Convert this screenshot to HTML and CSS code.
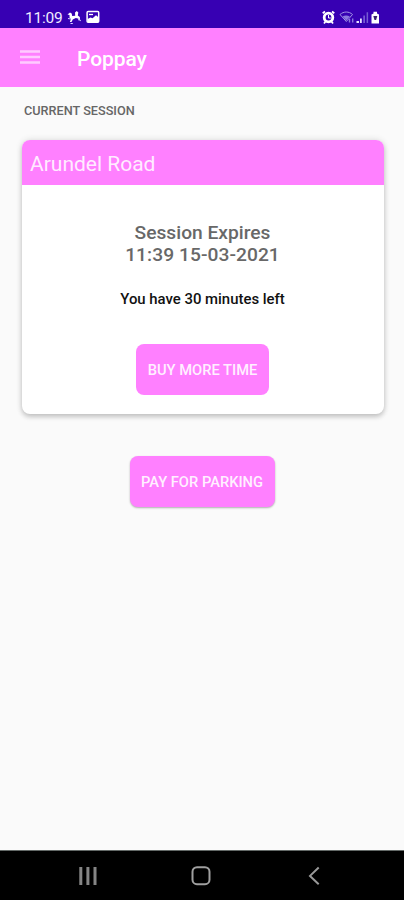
FILE: index.html
```
<!DOCTYPE html>
<html lang="en">
<head>
<meta charset="utf-8">
<meta name="viewport" content="width=device-width, initial-scale=1">
<title>Poppay</title>
<link rel="stylesheet" href="styles.css">
</head>
<body>
<div class="phone">
  <div class="status">
    <span class="clock">11:09</span>
    <svg class="horse" width="15" height="15" viewBox="0 0 15 15"><path d="M.500 4.500L3 2.500l1.700 1 .5 2.500 3-.300L8 2.500 9.800 1l1.500 1.500-.5 3 2 1.500.3 3-1.500.5-.5-2-2.300-.5-3 1.500-1.300 2.500H2.800L4 9 2.500 7.500V5z" fill="#fff"/><path d="M1 8.500l3 .5M3.500 13.500h2.300M11 8l2.700 3" fill="none" stroke="#d5cdff" stroke-width="1.100"/></svg>
    <svg class="photo" width="14" height="14" viewBox="0 0 14 14"><rect x="1.100" y="1.400" width="11.600" height="10.900" rx="1" fill="none" stroke="#fff" stroke-width="1.500"/><path d="M1.500 9l3-1.500 2 .8 3.500-3 2.500 2v5h-11z" fill="#fff"/><path d="M3 4.500h4" stroke="#fff" stroke-width="1.300"/></svg>
    <svg class="indicators" width="62" height="15" viewBox="0 0 62 15">
      <path d="M1.700 3.200L4 1.500M13.300 3.200L11 1.500M3 13.500l1.500-2M12 13.500l-1.500-2" stroke="#fff" stroke-width="1.800"/>
      <circle cx="7.500" cy="7.500" r="4.300" fill="none" stroke="#fff" stroke-width="2.800"/>
      <path d="M7.500 5v3h2.300" fill="none" stroke="#fff"/>
      <path d="M19 4.500c3.700-3.300 9-3.300 12.500 0L25.300 11.500z" fill="none" stroke="#a294e4" stroke-width="1"/>
      <path d="M21.500 6.500c2.200-1.300 5-1.300 7.300 0l-3.500 4z" fill="#8c79df"/>
      <path d="M28.500 9v3.500M31.700 12.500V8.500" stroke="#8b78dd" stroke-width="1.400"/>
      <path d="M35.500 13v-2H38v2zM39 13V8.500h1.800V13z" fill="#e7e2ff"/>
      <path d="M42.300 13V5.500h1.700V13zM45.600 13V2.200h1.500V13z" fill="#765bd2"/>
      <path d="M50.500 4.500l2-1V1.700h3.500v1.800l2 1v9h-7.500z" fill="#fff"/>
      <path d="M52.300 6h4l-1.200 4h-1.600z" fill="#3b216f"/>
    </svg>
  </div>
  <header class="appbar">
    <svg class="menu" width="20" height="16" viewBox="0 0 20 16"><path d="M0 2.500h20M0 8h20M0 13.500h20" stroke="#ffcaff" stroke-width="2.600"/></svg>
    <h1 class="title">Poppay</h1>
  </header>
  <main class="content">
    <h2 class="label"><span>CURRENT SESSION</span></h2>
    <section class="card">
      <div class="place"><span>Arundel Road</span></div>
      <div class="details">
        <div class="expires"><span>Session Expires</span></div>
        <div class="expires date"><span>11:39 15-03-2021</span></div>
        <div class="left"><span>You have 30 minutes left</span></div>
        <button class="button buy">BUY MORE TIME</button>
      </div>
    </section>
    <button class="button pay">PAY FOR PARKING</button>
  </main>
  <nav class="navbar">
    <svg width="20" height="20" viewBox="0 0 20 20"><path d="M2.800 1v18M9.900 1v18M17 1v18" stroke="#858585" stroke-width="3"/></svg>
    <svg width="20" height="20" viewBox="0 0 20 20"><rect x="1.500" y="1.200" width="17" height="17" rx="4.500" fill="none" stroke="#a0a0a0" stroke-width="2"/></svg>
    <svg width="20" height="20" viewBox="0 0 20 20"><path d="M14.700 1.500L6 9.900l8.700 8.300" fill="none" stroke="#999" stroke-width="2"/></svg>
  </nav>
</div>
</body>
</html>
```
FILE: styles.css
```
* { box-sizing: border-box; }
body { margin: 0; font-family: Roboto, "Liberation Sans", sans-serif; }
h1, h2 { margin: 0; }
.phone {
  width: 404px;
  height: 900px;
  display: flex;
  flex-direction: column;
  background: #fafafa;
  overflow: hidden;
}
.status {
  height: 27.500px;
  flex: none;
  display: flex;
  align-items: flex-start;
  padding: 10px 21px 0 25px;
  background: #3700b3;
  color: #f0ecff;
}
.clock { width: 42px; font-size: 15.500px; line-height: 16px; letter-spacing: -0.200px; }
.horse { margin-right: 4px; }
.indicators { margin-left: auto; }
.appbar {
  height: 59px;
  flex: none;
  display: flex;
  align-items: center;
  padding-left: 20px;
  background: #ff80ff;
}
.menu { margin-right: 37px; }
.title { padding-top: 4px; font-size: 21px; font-weight: 500; line-height: 28px; letter-spacing: -0.100px; color: #fff; }
.content { flex: 1; display: flex; flex-direction: column; align-items: center; }
.label {
  align-self: flex-start;
  margin: 16.500px 0 0 24px;
  font-size: 12.700px;
  font-weight: 500;
  line-height: 16px;
  color: #666;
}
.card {
  width: 362px;
  height: 274px;
  margin: 20.500px 0 0 1px;
  border-radius: 8px;
  background: #fff;
  box-shadow: 0 3px 5px rgba(0, 0, 0, .18), 0 0 7px rgba(0, 0, 0, .12);
  overflow: hidden;
}
.place { height: 45px; padding: 2px 0 0 8.500px; font-size: 21px; line-height: 45px; background: #ff80ff; color: #ffecff; }
.details { display: flex; flex-direction: column; align-items: center; padding-top: 37px; }
.expires { font-size: 19.200px; font-weight: 500; line-height: 22.500px; color: #686868; }
.date { letter-spacing: 0.060px; }
.left { margin-top: 23px; font-size: 14.900px; font-weight: 500; line-height: 18px; color: #111; }
.button {
  height: 51px;
  padding: 1px 0 0;
  border: 0;
  border-radius: 8px;
  background: #ff80ff;
  color: #fff0ff;
  font: 500 14.700px/50px Roboto, "Liberation Sans", sans-serif;
}
.buy { width: 133px; margin-top: 36px; }
.pay { width: 145px; margin-top: 42px; box-shadow: 0 1px 2px rgba(0, 0, 0, .3); }
.navbar {
  height: 50px;
  flex: none;
  display: flex;
  justify-content: space-between;
  padding: 15px 80px 0 78px;
  border-top: 1px solid #646a68;
  background: #000;
}
```
